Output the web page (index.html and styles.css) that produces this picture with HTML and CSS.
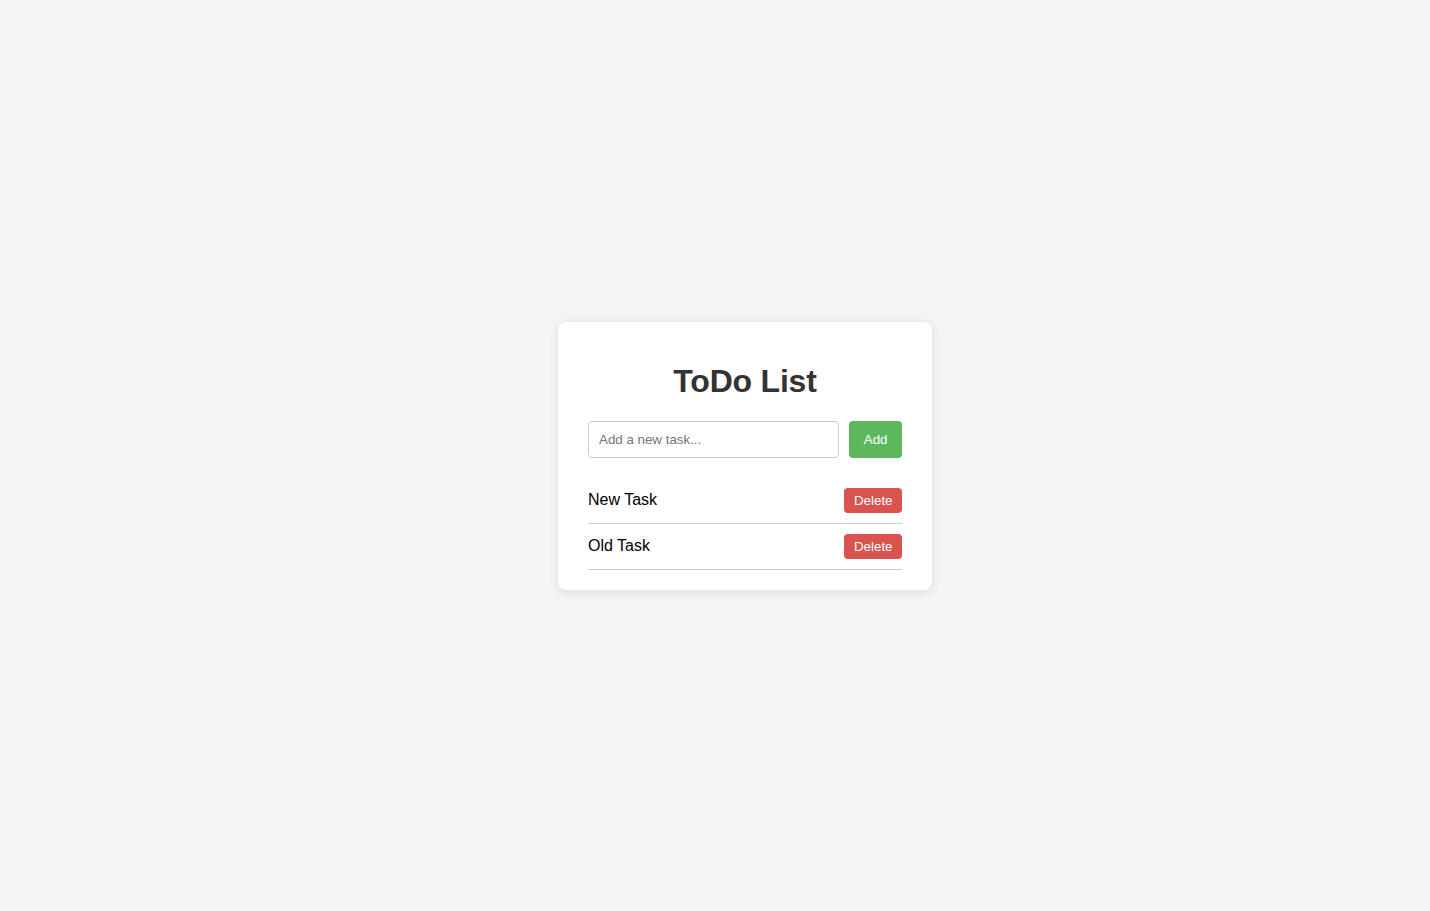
FILE: index.html
```html
<!DOCTYPE html>
<html lang="en">
<head>
<meta charset="UTF-8">
<title>ToDo List</title>
<link rel="stylesheet" href="styles.css">
</head>
<body>
<div class="card">
  <h1 class="title">ToDo List</h1>
  <div class="add-row">
    <input class="task-input" type="text" placeholder="Add a new task...">
    <button class="btn btn-add">Add</button>
  </div>
  <ul class="task-list">
    <li class="task"><span class="task-text">New Task</span><button class="btn btn-delete">Delete</button></li>
    <li class="task"><span class="task-text">Old Task</span><button class="btn btn-delete">Delete</button></li>
  </ul>
</div>
</body>
</html>
```
FILE: styles.css
```css
html, body {
  margin: 0;
  height: 100%;
}
body {
  background: #f4f4f4;
  font-family: "Liberation Sans", Arial, sans-serif;
  display: flex;
  justify-content: center;
  align-items: center;
  padding-left: 60px;
  box-sizing: border-box;
}
.card {
  background: #fff;
  width: 314px;
  padding: 20px 30px;
  border-radius: 8px;
  box-shadow: 0 2px 10px rgba(0, 0, 0, 0.1);
}
.title {
  margin: 21px 0 21px;
  font-size: 32px;
  font-weight: bold;
  text-align: center;
  color: #333;
  line-height: 37px;
  letter-spacing: -0.2px;
}
.add-row {
  display: flex;
  gap: 10px;
}
.task-input {
  flex: 1;
  min-width: 0;
  padding: 10px;
  border: 1px solid #ccc;
  border-radius: 4px;
  font-family: "Liberation Sans", Arial, sans-serif;
  font-size: 13.333px;
  line-height: 15px;
  color: #333;
}
.task-input::placeholder {
  color: #757575;
}
.btn {
  border: none;
  border-radius: 4px;
  color: #fff;
  font-family: "Liberation Sans", Arial, sans-serif;
  font-size: 13.333px;
  line-height: 15px;
  cursor: pointer;
}
.btn-add {
  background: #5cb85c;
  padding: 10px 14.5px;
}
.btn-delete {
  background: #d9534f;
  padding: 5px 9.5px;
}
.task-list {
  list-style: none;
  margin: 20px 0 0;
  padding: 0;
}
.task {
  display: flex;
  justify-content: space-between;
  align-items: center;
  padding: 10px 0;
  border-bottom: 1px solid #ccc;
}
.task-text {
  font-size: 16px;
  color: #000;
}
```
